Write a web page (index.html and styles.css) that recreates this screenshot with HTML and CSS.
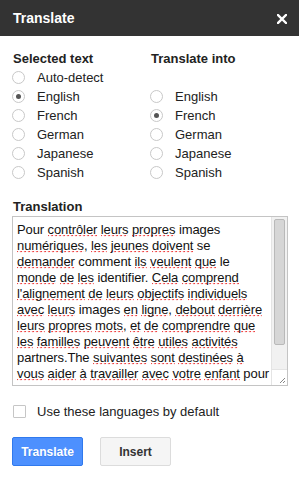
FILE: index.html
```html
<!DOCTYPE html>
<html lang="en">
<head>
    <meta charset="UTF-8">
    <meta name="viewport" content="width=device-width, initial-scale=1.0">
    <title>Translate</title>
    <link rel="stylesheet" href="styles.css">
</head>
<body>
    <div class="dialog">
        <div class="titlebar">
            <span class="title">Translate</span>
            <span class="close">
                <svg width="10" height="10" viewBox="0 0 10 10"><path d="M1 1L9 9M9 1L1 9" stroke="#fff" stroke-width="2.4" stroke-linecap="square"/></svg>
            </span>
        </div>
        <div class="content">
            <div class="langs">
                <div class="col">
                    <div class="col-title">Selected text</div>
                    <label class="opt"><span class="radio"></span>Auto-detect</label>
                    <label class="opt"><span class="radio checked"></span>English</label>
                    <label class="opt"><span class="radio"></span>French</label>
                    <label class="opt"><span class="radio"></span>German</label>
                    <label class="opt"><span class="radio"></span>Japanese</label>
                    <label class="opt"><span class="radio"></span>Spanish</label>
                </div>
                <div class="col">
                    <div class="col-title">Translate into</div>
                    <div class="opt"></div>
                    <label class="opt"><span class="radio"></span>English</label>
                    <label class="opt"><span class="radio checked"></span>French</label>
                    <label class="opt"><span class="radio"></span>German</label>
                    <label class="opt"><span class="radio"></span>Japanese</label>
                    <label class="opt"><span class="radio"></span>Spanish</label>
                </div>
            </div>

            <div class="section-title">Translation</div>
            <div class="output">
                <div class="output-text">Pour <span class="sp">contrôler</span> <span class="sp">leurs</span> <span class="sp">propres</span> images<br>
<span class="sp">numériques</span>, <span class="sp">les</span> <span class="sp">jeunes</span> <span class="sp">doivent</span> se<br>
<span class="sp">demander</span> comment <span class="sp">ils</span> <span class="sp">veulent</span> <span class="sp">que</span> le<br>
<span class="sp">monde</span> <span class="sp">de</span> <span class="sp">les</span> identifier. <span class="sp">Cela</span> <span class="sp">comprend</span><br>
<span class="sp">l'alignement</span> <span class="sp">de</span> <span class="sp">leurs</span> <span class="sp">objectifs</span> <span class="sp">individuels</span><br>
<span class="sp">avec</span> <span class="sp">leurs</span> images <span class="sp">en</span> <span class="sp">ligne</span>, <span class="sp">debout</span> <span class="sp">derrière</span><br>
<span class="sp">leurs</span> <span class="sp">propres</span> <span class="sp">mots</span>, <span class="sp">et</span> <span class="sp">de</span> <span class="sp">comprendre</span> <span class="sp">que</span><br>
<span class="sp">les</span> <span class="sp">familles</span> <span class="sp">peuvent</span> <span class="sp">être</span> <span class="sp">utiles</span> <span class="sp">activités</span><br>
partners.The <span class="sp">suivantes</span> <span class="sp">sont</span> <span class="sp">destinées</span> <span class="sp">à</span><br>
<span class="sp">vous</span> <span class="sp">aider</span> <span class="sp">à</span> <span class="sp">travailler</span> <span class="sp">avec</span> <span class="sp">votre</span> <span class="sp">enfant</span> pour<br>
<span class="sp">améliorer</span> <span class="sp">son</span> image <span class="sp">numérique</span>.</div>
                <div class="scrollbar">
                    <div class="track"><div class="thumb"></div></div>
                    <div class="resizer">
                        <svg width="15" height="15" viewBox="0 0 15 15"><path d="M13 8L8 13M13 11L11 13" stroke="#888" stroke-width="1"/></svg>
                    </div>
                </div>
            </div>

            <label class="default-opt"><span class="checkbox"></span>Use these languages by default</label>

            <div class="actions">
                <button class="btn btn-primary">Translate</button>
                <button class="btn">Insert</button>
            </div>
        </div>
    </div>
</body>
</html>
```

FILE: styles.css
```css
body {
    margin: 0;
    font-family: "Liberation Sans", Arial, sans-serif;
    font-size: 13px;
    color: #222;
    background: #fff;
}
.titlebar {
    height: 36px;
    background-color: #333;
    display: flex;
    align-items: center;
    justify-content: space-between;
    padding: 0 12px 0 13px;
}
.title {
    color: #fff;
    font-weight: bold;
    font-size: 14px;
}
.close {
    display: flex;
    margin-top: 2px;
}
.content {
    padding: 15px 11px 0 12px;
}
.langs {
    display: grid;
    grid-template-columns: 138px 1fr;
}
.col-title, .section-title {
    font-weight: bold;
    line-height: 15px;
    padding-left: 1px;
}
.col-title {
    margin-bottom: 2px;
}
.opt {
    display: flex;
    align-items: center;
    height: 19px;
}
.radio {
    width: 11px;
    height: 11px;
    border: 1px solid #c8c8c8;
    border-radius: 50%;
    margin-right: 12px;
    display: flex;
    align-items: center;
    justify-content: center;
}
.radio.checked::after {
    content: "";
    width: 5px;
    height: 5px;
    border-radius: 50%;
    background: #555;
}
.section-title {
    margin-top: 17px;
}
.output {
    margin-top: 2px;
    height: 168px;
    border: 1px solid #c4c4c4;
    display: flex;
}
.output-text {
    flex: 1;
    overflow: hidden;
    white-space: nowrap;
    padding: 5px 0 0 4px;
    line-height: 16px;
    letter-spacing: -0.1px;
    color: #111;
}
.sp {
    background-image:
        linear-gradient(45deg, transparent 65%, #e33 80%, transparent 90%),
        linear-gradient(135deg, transparent 5%, #e33 15%, transparent 35%);
    background-size: 4px 2px;
    background-repeat: repeat-x;
    background-position: left bottom;
}
.scrollbar {
    width: 15px;
    display: flex;
    flex-direction: column;
    background: #f1f1f1;
    border-left: 1px solid #e4e4e4;
}
.track {
    flex: 1;
    padding: 2px 2px 0 2px;
}
.thumb {
    height: 124px;
    background: #d6d6d6;
    border: 1px solid #b9b9b9;
    border-radius: 2px;
}
.resizer {
    height: 15px;
    background: #fff;
    border-top: 1px solid #e4e4e4;
    display: flex;
}
.default-opt {
    display: flex;
    align-items: center;
    height: 15px;
    margin-top: 18px;
    padding-left: 1px;
}
.checkbox {
    width: 11px;
    height: 11px;
    border: 1px solid #c6c6c6;
    border-radius: 1px;
    margin-right: 11px;
}
.actions {
    display: flex;
    gap: 17px;
    margin-top: 18px;
}
.btn {
    width: 71px;
    height: 29px;
    font-family: "Liberation Sans", Arial, sans-serif;
    font-size: 12px;
    font-weight: bold;
    color: #333;
    background: #f5f5f5;
    border: 1px solid #dcdcdc;
    border-radius: 2px;
    padding: 0;
}
.btn-primary {
    color: #fff;
    background: #4d90fe;
    border-color: #3079ed;
    text-shadow: 0 1px rgba(0, 0, 0, 0.1);
}
```
